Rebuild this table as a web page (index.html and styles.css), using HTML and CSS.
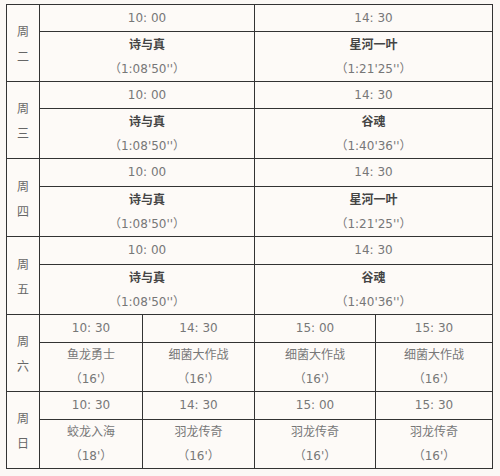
FILE: index.html
```html
<!DOCTYPE html>
<html lang="zh">
<head>
<meta charset="utf-8">
<link rel="stylesheet" href="styles.css">
</head>
<body>
<div class="wrap">
<table class="sched">
<colgroup>
<col class="c-day"><col class="c1"><col class="c2"><col class="c3"><col class="c4">
</colgroup>
<tbody>
<tr class="t"><td class="day" rowspan="2">周<br>二</td><td colspan="2">10: 00</td><td colspan="2">14: 30</td></tr>
<tr class="m"><td colspan="2"><b>诗与真</b><br>（1:08'50''）</td><td colspan="2"><b>星河一叶</b><br>（1:21'25''）</td></tr>
<tr class="t"><td class="day" rowspan="2">周<br>三</td><td colspan="2">10: 00</td><td colspan="2">14: 30</td></tr>
<tr class="m"><td colspan="2"><b>诗与真</b><br>（1:08'50''）</td><td colspan="2"><b>谷魂</b><br>（1:40'36''）</td></tr>
<tr class="t tall"><td class="day" rowspan="2">周<br>四</td><td colspan="2">10: 00</td><td colspan="2">14: 30</td></tr>
<tr class="m"><td colspan="2"><b>诗与真</b><br>（1:08'50''）</td><td colspan="2"><b>星河一叶</b><br>（1:21'25''）</td></tr>
<tr class="t tall"><td class="day" rowspan="2">周<br>五</td><td colspan="2">10: 00</td><td colspan="2">14: 30</td></tr>
<tr class="m"><td colspan="2"><b>诗与真</b><br>（1:08'50''）</td><td colspan="2"><b>谷魂</b><br>（1:40'36''）</td></tr>
<tr class="t tall"><td class="day" rowspan="2">周<br>六</td><td>10: 30</td><td>14: 30</td><td>15: 00</td><td>15: 30</td></tr>
<tr class="m"><td>鱼龙勇士<br>（16'）</td><td>细菌大作战<br>（16'）</td><td>细菌大作战<br>（16'）</td><td>细菌大作战<br>（16'）</td></tr>
<tr class="t tall"><td class="day" rowspan="2">周<br>日</td><td>10: 30</td><td>14: 30</td><td>15: 00</td><td>15: 30</td></tr>
<tr class="m"><td>蛟龙入海<br>（18'）</td><td>羽龙传奇<br>（16'）</td><td>羽龙传奇<br>（16'）</td><td>羽龙传奇<br>（16'）</td></tr>
</tbody>
</table>
</div>
</body>
</html>
```
FILE: styles.css
```css
html, body {
  margin: 0;
  padding: 0;
  background: #fbf8f5;
}
.wrap {
  padding: 4px 0 0 6px;
}
.sched {
  border-collapse: collapse;
  table-layout: fixed;
  width: 486px;
  background: #fdfaf7;
  font-family: "DejaVu Sans", "Noto Sans CJK SC", sans-serif;
  font-size: 12px;
  color: #777;
}
.c-day { width: 33px; }
.c1 { width: 103px; }
.c2 { width: 112px; }
.c3 { width: 121px; }
.c4 { width: 117px; }
.sched td {
  border: 1px solid #333;
  text-align: center;
  vertical-align: middle;
  padding: 0;
}
.t td {
  height: 26px;
  line-height: 26px;
}
.t.tall td {
  height: 27px;
  line-height: 27px;
}
.m td {
  height: 48px;
  line-height: 24px;
}
.sched td.day {
  line-height: 25px;
  color: #666;
  font-family: "Noto Sans CJK SC", sans-serif;
}
.m b {
  color: #444;
  font-weight: bold;
  font-family: "Noto Sans CJK SC", sans-serif;
}
```
